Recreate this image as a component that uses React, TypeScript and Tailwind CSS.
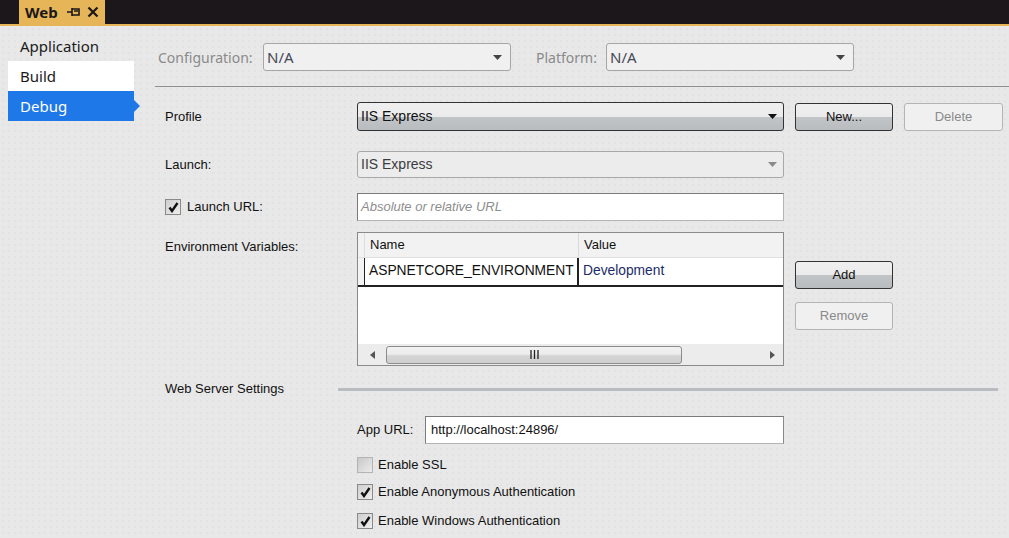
import React from "react";

const dots = {
  backgroundImage: "radial-gradient(#d6d6d6 0.5px, transparent 0.8px)",
  backgroundSize: "6px 6px",
};

function Arrow({ color = "#222" }: { color?: string }) {
  return (
    <svg width="9" height="5" viewBox="0 0 9 5" className="shrink-0">
      <path d="M0 0 H9 L4.5 5 Z" fill={color} />
    </svg>
  );
}

function Check({ checked, disabled }: { checked?: boolean; disabled?: boolean }) {
  return (
    <div
      className={
        "w-[16px] h-[16px] border shrink-0 flex items-center justify-center " +
        (disabled
          ? "border-[#b4b4b4] bg-gradient-to-br from-[#c8c8c8] to-[#ececec]"
          : "border-[#8a8a8a] bg-gradient-to-br from-[#cfcfcf] to-[#eeeeee]")
      }
    >
      {checked && (
        <svg width="11" height="11" viewBox="0 0 11 11">
          <path d="M1.5 5.5 L4 9 L9.5 1" stroke="#111" strokeWidth="2.4" fill="none" />
        </svg>
      )}
    </div>
  );
}

export default function App() {
  return (
    <div
      className="w-[1009px] h-[538px] overflow-hidden bg-[#e8e8e8] text-[#111] flex flex-col"
      style={{ fontFamily: '"Liberation Sans", Arial, sans-serif' }}
    >
      {/* Title bar */}
      <div className="h-[24px] bg-[#1b171b] flex shrink-0">
        <div className="ml-[19px] w-[86px] h-[24px] bg-[#e6b557] flex items-center pl-[6px] text-[#1b171b]">
          <span className="text-[15px] font-bold leading-none" style={{ fontFamily: '"Noto Sans", sans-serif' }}>
            Web
          </span>
          <svg width="14" height="10" viewBox="0 0 14 10" className="ml-[9px]">
            <path d="M0 5 H5 M5 1 V9 M5 2 H12 V8 H5 M7 4 H11" stroke="#1b171b" strokeWidth="1.6" fill="none" />
          </svg>
          <svg width="12" height="12" viewBox="0 0 12 12" className="ml-[6px]">
            <path d="M1.5 1.5 L10.5 10.5 M10.5 1.5 L1.5 10.5" stroke="#1b171b" strokeWidth="2.2" />
          </svg>
        </div>
      </div>
      <div className="h-[2px] bg-[#e6b557] shrink-0" />

      <div className="flex flex-1" style={dots}>
        {/* Sidebar */}
        <div
          className="w-[140px] shrink-0 pt-[5px] text-[15px]"
          style={{ fontFamily: '"Noto Sans", sans-serif' }}
        >
          <div className="ml-[8px] w-[126px] h-[30px] pl-[12px] flex items-center text-[#1a1a1a]">Application</div>
          <div className="ml-[8px] w-[126px] h-[30px] pl-[12px] flex items-center bg-white text-[#1a1a1a]">Build</div>
          <div className="relative ml-[8px] w-[126px] h-[30px] pl-[12px] flex items-center bg-[#1f78e8] text-white">
            Debug
            <div className="absolute right-[-6px] top-[9px] w-0 h-0 border-y-[6px] border-y-transparent border-l-[6px] border-l-[#1f78e8]" />
          </div>
        </div>

        {/* Main */}
        <div className="flex-1 flex flex-col">
          {/* Config row */}
          <div className="mt-[17px] h-[28px] flex items-center" style={{ fontFamily: '"Noto Sans", sans-serif' }}>
            <div className="ml-[18px] w-[105px] text-[14px] text-[#8a8a8a]">Configuration:</div>
            <div className="w-[248px] h-[28px] border border-[#a6a6a6] rounded-[3px] bg-[#f0f0f0] flex items-center pl-[3px] pr-[8px]">
              <span className="flex-1 text-[15px] text-[#454a55]">N/A</span>
              <Arrow color="#444" />
            </div>
            <div className="ml-[25px] w-[70px] text-[14px] text-[#8a8a8a]">Platform:</div>
            <div className="w-[248px] h-[28px] border border-[#a6a6a6] rounded-[3px] bg-[#f0f0f0] flex items-center pl-[3px] pr-[8px]">
              <span className="flex-1 text-[15px] text-[#454a55]">N/A</span>
              <Arrow color="#444" />
            </div>
          </div>
          <div className="mt-[15px] ml-[15px] h-[1px] bg-[#8e8e8e]" />

          {/* Profile */}
          <div className="mt-[15px] h-[29px] flex items-center text-[13px]">
            <div className="pl-[25px] w-[217px]">Profile</div>
            <div className="w-[427px] h-[29px] border border-[#333] rounded-[3px] bg-[linear-gradient(#efefef_0%,#ebebeb_50%,#c2c5c8_51%,#b9bcbf_100%)] flex items-center pl-[3px] pr-[6px]">
              <span className="flex-1 text-[14px]">IIS Express</span>
              <Arrow color="#111" />
            </div>
            <div className="ml-[11px] w-[98px] h-[28px] border border-[#333] rounded-[3px] bg-[linear-gradient(#efefef_0%,#ebebeb_50%,#c2c5c8_51%,#b9bcbf_100%)] flex items-center justify-center">
              New...
            </div>
            <div className="ml-[11px] w-[99px] h-[28px] border border-[#b4b4b4] rounded-[3px] bg-[#f0f0f0] flex items-center justify-center text-[#8a8a8a]">
              Delete
            </div>
          </div>

          {/* Launch */}
          <div className="mt-[20px] h-[27px] flex items-center text-[13px]">
            <div className="pl-[25px] w-[217px]">Launch:</div>
            <div className="w-[427px] h-[27px] border border-[#a8a8a8] rounded-[3px] bg-[#ececec] flex items-center pl-[3px] pr-[6px]">
              <span className="flex-1 text-[14px] text-[#3c3c3c]">IIS Express</span>
              <Arrow color="#8a8a8a" />
            </div>
          </div>

          {/* Launch URL */}
          <div className="mt-[15px] h-[28px] flex items-center text-[13px]">
            <div className="pl-[25px] w-[217px] flex items-center gap-[6px]">
              <Check checked />
              <span>Launch URL:</span>
            </div>
            <div className="w-[427px] h-[28px] border border-[#7a7a7a] border-r-[#b4b4b4] border-b-[#b4b4b4] bg-white flex items-center pl-[3px] italic text-[#8e8e8e]">
              Absolute or relative URL
            </div>
          </div>

          {/* Env vars */}
          <div className="mt-[11px] flex text-[13px]">
            <div className="pl-[25px] w-[217px] pt-[5px]">Environment Variables:</div>
            <div className="w-[427px] h-[134px] border border-[#8a8a8a] bg-white flex flex-col">
              <div className="h-[25px] flex bg-[#f2f2f2] border-b border-[#e0e0e0]">
                <div className="w-[7px] border-r border-[#dcdcdc]" />
                <div className="w-[214px] border-r border-[#d8d8d8] flex items-center pl-[5px]">Name</div>
                <div className="flex-1 flex items-center pl-[5px]">Value</div>
              </div>
              <div className="h-[29px] flex border-b-2 border-[#222] text-[13.8px]">
                <div className="w-[7px] bg-[#f4f4f4] border-r border-[#222]" />
                <div className="w-[214px] border-r-2 border-[#222] flex items-center pl-[4px] whitespace-nowrap overflow-hidden">ASPNETCORE_ENVIRONMENT</div>
                <div className="flex-1 flex items-center pl-[4px] text-[#1a2a6a]">Development</div>
              </div>
              <div className="flex-1" />
              <div className="h-[21px] bg-[#ececec] flex items-center">
                <div className="w-[28px] flex justify-center">
                  <svg width="5" height="8" viewBox="0 0 5 8"><path d="M5 0 V8 L0 4 Z" fill="#555" /></svg>
                </div>
                <div className="w-[296px] h-[18px] border border-[#8c8c8c] rounded-[3px] bg-[linear-gradient(#f2f2f2_0%,#ececec_45%,#d4d4d4_55%,#cfcfcf_100%)] flex items-center justify-center">
                  <svg width="9" height="9" viewBox="0 0 9 9">
                    <path d="M1 0 V9 M4.5 0 V9 M8 0 V9" stroke="#222" strokeWidth="1.3" />
                  </svg>
                </div>
                <div className="flex-1" />
                <div className="w-[22px] flex justify-center">
                  <svg width="5" height="8" viewBox="0 0 5 8"><path d="M0 0 V8 L5 4 Z" fill="#555" /></svg>
                </div>
              </div>
            </div>
            <div className="ml-[11px] pt-[29px] flex flex-col gap-[13px]">
              <div className="w-[98px] h-[28px] border border-[#333] rounded-[3px] bg-[linear-gradient(#efefef_0%,#ebebeb_50%,#c2c5c8_51%,#b9bcbf_100%)] flex items-center justify-center">
                Add
              </div>
              <div className="w-[98px] h-[28px] border border-[#b4b4b4] rounded-[3px] bg-[#f0f0f0] flex items-center justify-center text-[#8a8a8a]">
                Remove
              </div>
            </div>
          </div>

          {/* Web server settings */}
          <div className="mt-[15px] h-[16px] flex items-center text-[13px]">
            <div className="pl-[25px] w-[198px]">Web Server Settings</div>
            <div className="w-[660px] h-[3px] bg-[#b9bdc1]" />
          </div>

          {/* App URL */}
          <div className="mt-[19px] h-[28px] flex items-center text-[13px]">
            <div className="w-[217px]" />
            <div className="w-[68px]">App URL:</div>
            <div className="w-[359px] h-[28px] border border-[#7a7a7a] border-r-[#8a8a8a] border-b-[#b4b4b4] bg-white flex items-center pl-[5px]">
              http://localhost:24896/
            </div>
          </div>

          {/* Checkboxes */}
          <div className="mt-[13px] h-[16px] flex items-center text-[13px]">
            <div className="w-[217px]" />
            <Check disabled />
            <span className="ml-[5px]">Enable SSL</span>
          </div>
          <div className="mt-[11px] h-[16px] flex items-center text-[13px]">
            <div className="w-[217px]" />
            <Check checked />
            <span className="ml-[5px]">Enable Anonymous Authentication</span>
          </div>
          <div className="mt-[13px] h-[16px] flex items-center text-[13px]">
            <div className="w-[217px]" />
            <Check checked />
            <span className="ml-[5px]">Enable Windows Authentication</span>
          </div>
        </div>
      </div>
    </div>
  );
}
